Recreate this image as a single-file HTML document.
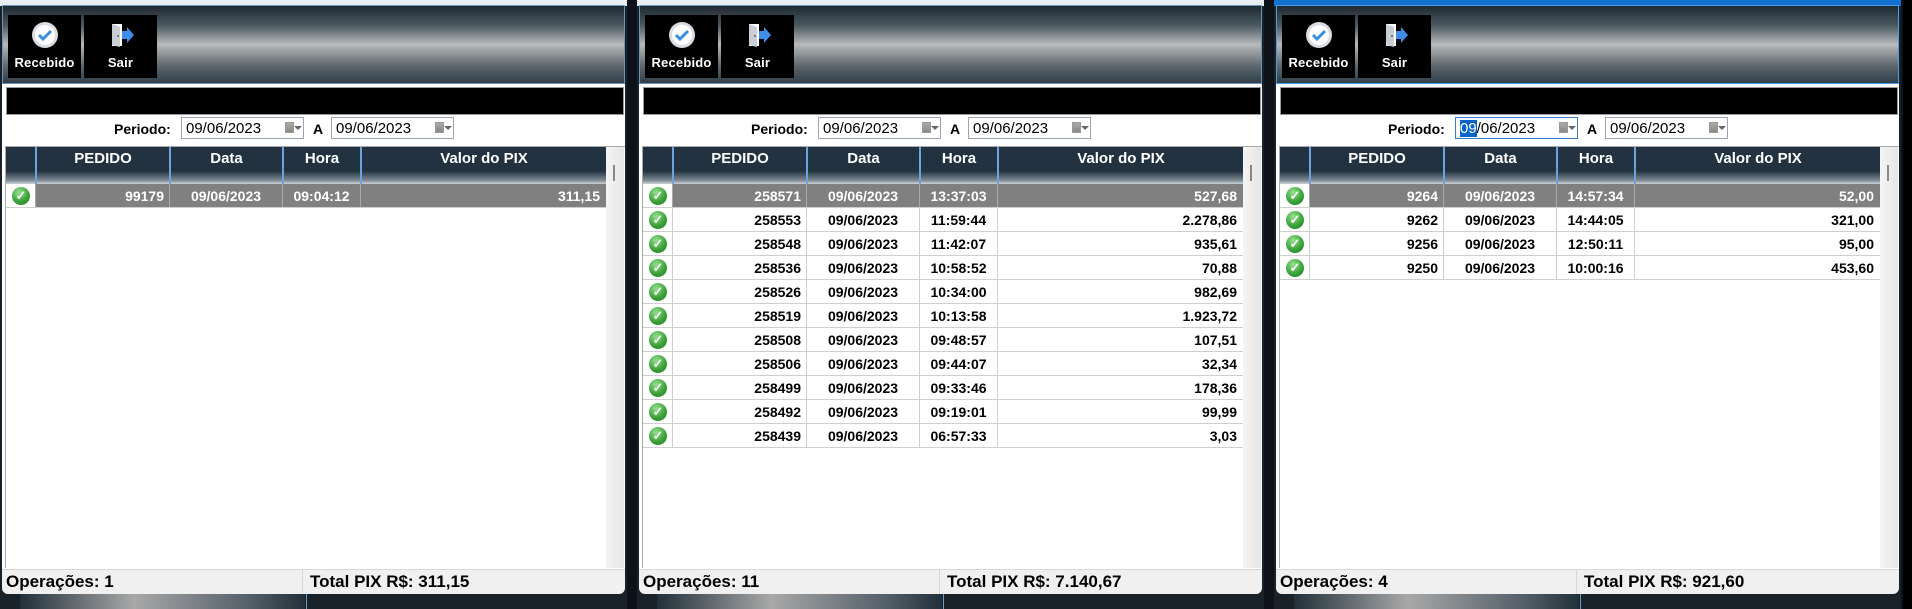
<!DOCTYPE html>
<html><head><meta charset="utf-8"><style>
*{margin:0;padding:0;box-sizing:border-box}
body{width:1912px;height:609px;background:#0c1218;position:relative;overflow:hidden;font-family:"Liberation Sans",sans-serif}
.p{position:absolute;top:0;width:627px;height:609px;background:#1a2229}
.top{position:absolute;left:0;top:0;width:627px;height:6px;background:#e9eef3}
.tb{position:absolute;left:2px;top:5px;width:623px;height:79px;border:1px solid #6d93b6;background:linear-gradient(#1f2a33 0%,#4a5860 25%,#b8babb 50%,#5c666c 78%,#2f3f4a 100%)}
.btn{position:absolute;top:9px;height:63px;background:#000;color:#fff;font-size:13px;font-weight:bold;text-align:center}
.btn span{position:absolute;left:0;right:0;top:40px;letter-spacing:.2px}
.body{position:absolute;left:2px;top:84px;width:623px;height:485px;background:#fff}
.bar{position:absolute;left:6px;top:87px;width:618px;height:28px;background:#000;border:1px solid #9a9a9a}
.lbl{position:absolute;top:121px;font-size:14px;font-weight:bold;color:#000}
.dt{position:absolute;top:117px;width:123px;height:22px;border:1px solid #9aa6b3;background:#fff;font-size:15px;padding:2px 0 0 4px;color:#000}
.dt i{position:absolute;right:9px;top:4px;width:9px;height:11px;background:linear-gradient(#aaa,#888);border:1px solid #999}
.dt b{position:absolute;right:1px;top:8px;width:0;height:0;border-left:4px solid transparent;border-right:4px solid transparent;border-top:4px solid #666}
.hd{position:absolute;left:6px;top:147px;width:600px;height:37px;background:linear-gradient(#223240 0%,#223240 65%,#7e8a93 90%,#cdd3d8 100%)}
.hc{position:absolute;top:0;height:37px;border-left:2px solid #6fa3dd;color:#fff;font-weight:bold;font-size:15px;text-align:center;padding-top:3px}
.sb{position:absolute;left:606px;top:147px;width:18px;height:421px;background:linear-gradient(90deg,#f4f4f4,#e6e6e6)}
.sb:after{content:"";position:absolute;left:7px;top:18px;width:2px;height:16px;background:#888}
.gl{position:absolute;left:5px;top:146px;width:620px;height:1px;background:#aaa}
.gb{position:absolute;left:5px;top:146px;width:1px;height:422px;background:#aaa}
.r{position:absolute;left:6px;width:600px;height:24px;border-bottom:1px solid #cfcfcf;font-size:14px;font-weight:bold;color:#000}
.r div{position:absolute;top:0;height:23px;padding-top:4px;border-left:1px solid #cfcfcf}
.r.s .c{background:#808080;color:#fff;border-left-color:#a8a8a8}
.ic{left:0;width:29px;border-left:none!important}
.ic:after{content:"✓";position:absolute;left:6px;top:3px;width:18px;height:18px;border-radius:50%;background:radial-gradient(circle at 40% 30%,#9be08f,#3aa33a 55%,#1c7a22);color:#fff;font-size:13px;line-height:18px;text-align:center;font-weight:bold}
.c1{left:29px;width:134px;text-align:right;padding-right:5px}
.c2{left:163px;width:113px;text-align:center}
.c3{left:276px;width:78px;text-align:center}
.c4{left:354px;width:246px;text-align:right;padding-right:6px}
.st{position:absolute;left:2px;top:569px;width:623px;height:25px;background:#f0f0f0;border-top:1px solid #d8d8d8;border-radius:0 0 6px 6px;font-size:17px;font-weight:bold;color:#000}
.st span{position:absolute;top:2px}
.st em{position:absolute;left:300px;top:0;width:1px;height:24px;background:#d8d8d8}
.bt{position:absolute;left:20px;top:594px;width:285px;height:15px;background:linear-gradient(90deg,#22303a,#a8a8a8 40%,#55606a 80%,#22303a)}
.bt:after{content:"";position:absolute;right:-2px;top:0;width:1px;height:15px;background:#6a9ccc}
</style></head><body>

<div class="p" style="left:0">
 <div class="top"></div>
 <div class="tb">
  <div class="btn" style="left:5px;width:73px">
   <svg style="position:absolute;left:23px;top:6px" width="28" height="28"><circle cx="14" cy="14" r="13" fill="#d9dde2"/><circle cx="14" cy="14" r="10" fill="#fff"/><path d="M8 14l4 4 8-8" stroke="#3a8de0" stroke-width="3" fill="none"/></svg>
   <span>Recebido</span></div>
  <div class="btn" style="left:81px;width:73px">
   <svg style="position:absolute;left:24px;top:6px" width="28" height="28"><path d="M4 3h10v22H4z" fill="#fff"/><path d="M4 3l8 3v20l-8-2z" fill="#c9ced4"/><path d="M14 10h5v-4l7 8-7 8v-4h-5z" fill="#3f8de8"/><circle cx="10" cy="15" r="1" fill="#666"/></svg>
   <span>Sair</span></div>
 </div>
 <div class="body"></div>
 <div class="bar"></div>
 <div class="lbl" style="left:114px">Periodo:</div>
 <div class="dt" style="left:181px">09/06/2023<i></i><b></b></div>
 <div class="lbl" style="left:313px">A</div>
 <div class="dt" style="left:331px">09/06/2023<i></i><b></b></div>
 <div class="gl"></div><div class="gb"></div>
 <div class="hd">
  <div class="hc" style="left:29px;width:134px">PEDIDO</div>
  <div class="hc" style="left:163px;width:113px">Data</div>
  <div class="hc" style="left:276px;width:78px">Hora</div>
  <div class="hc" style="left:354px;width:246px">Valor do PIX</div>
 </div>
 <div class="sb"></div>
 <div class="r s" style="top:184px"><div class="ic"></div><div class="c c1">99179</div><div class="c c2">09/06/2023</div><div class="c c3">09:04:12</div><div class="c c4">311,15</div></div>
 <div class="st"><span style="left:4px">Operações: 1</span><em></em><span style="left:308px">Total PIX R$: 311,15</span></div>
 <div class="bt"></div>
</div>

<div class="p" style="left:637px">
 <div class="top"></div>
 <div class="tb">
  <div class="btn" style="left:5px;width:73px">
   <svg style="position:absolute;left:23px;top:6px" width="28" height="28"><circle cx="14" cy="14" r="13" fill="#d9dde2"/><circle cx="14" cy="14" r="10" fill="#fff"/><path d="M8 14l4 4 8-8" stroke="#3a8de0" stroke-width="3" fill="none"/></svg>
   <span>Recebido</span></div>
  <div class="btn" style="left:81px;width:73px">
   <svg style="position:absolute;left:24px;top:6px" width="28" height="28"><path d="M4 3h10v22H4z" fill="#fff"/><path d="M4 3l8 3v20l-8-2z" fill="#c9ced4"/><path d="M14 10h5v-4l7 8-7 8v-4h-5z" fill="#3f8de8"/><circle cx="10" cy="15" r="1" fill="#666"/></svg>
   <span>Sair</span></div>
 </div>
 <div class="body"></div>
 <div class="bar"></div>
 <div class="lbl" style="left:114px">Periodo:</div>
 <div class="dt" style="left:181px">09/06/2023<i></i><b></b></div>
 <div class="lbl" style="left:313px">A</div>
 <div class="dt" style="left:331px">09/06/2023<i></i><b></b></div>
 <div class="gl"></div><div class="gb"></div>
 <div class="hd">
  <div class="hc" style="left:29px;width:134px">PEDIDO</div>
  <div class="hc" style="left:163px;width:113px">Data</div>
  <div class="hc" style="left:276px;width:78px">Hora</div>
  <div class="hc" style="left:354px;width:246px">Valor do PIX</div>
 </div>
 <div class="sb"></div>
 <div class="r s" style="top:184px"><div class="ic"></div><div class="c c1">258571</div><div class="c c2">09/06/2023</div><div class="c c3">13:37:03</div><div class="c c4">527,68</div></div>
 <div class="r" style="top:208px"><div class="ic"></div><div class="c c1">258553</div><div class="c c2">09/06/2023</div><div class="c c3">11:59:44</div><div class="c c4">2.278,86</div></div>
 <div class="r" style="top:232px"><div class="ic"></div><div class="c c1">258548</div><div class="c c2">09/06/2023</div><div class="c c3">11:42:07</div><div class="c c4">935,61</div></div>
 <div class="r" style="top:256px"><div class="ic"></div><div class="c c1">258536</div><div class="c c2">09/06/2023</div><div class="c c3">10:58:52</div><div class="c c4">70,88</div></div>
 <div class="r" style="top:280px"><div class="ic"></div><div class="c c1">258526</div><div class="c c2">09/06/2023</div><div class="c c3">10:34:00</div><div class="c c4">982,69</div></div>
 <div class="r" style="top:304px"><div class="ic"></div><div class="c c1">258519</div><div class="c c2">09/06/2023</div><div class="c c3">10:13:58</div><div class="c c4">1.923,72</div></div>
 <div class="r" style="top:328px"><div class="ic"></div><div class="c c1">258508</div><div class="c c2">09/06/2023</div><div class="c c3">09:48:57</div><div class="c c4">107,51</div></div>
 <div class="r" style="top:352px"><div class="ic"></div><div class="c c1">258506</div><div class="c c2">09/06/2023</div><div class="c c3">09:44:07</div><div class="c c4">32,34</div></div>
 <div class="r" style="top:376px"><div class="ic"></div><div class="c c1">258499</div><div class="c c2">09/06/2023</div><div class="c c3">09:33:46</div><div class="c c4">178,36</div></div>
 <div class="r" style="top:400px"><div class="ic"></div><div class="c c1">258492</div><div class="c c2">09/06/2023</div><div class="c c3">09:19:01</div><div class="c c4">99,99</div></div>
 <div class="r" style="top:424px"><div class="ic"></div><div class="c c1">258439</div><div class="c c2">09/06/2023</div><div class="c c3">06:57:33</div><div class="c c4">3,03</div></div>
 <div class="st"><span style="left:4px">Operações: 11</span><em></em><span style="left:308px">Total PIX R$: 7.140,67</span></div>
 <div class="bt"></div>
</div>

<div class="p" style="left:1274px">
 <div class="top" style="background:#1272d2"></div>
 <div class="tb" style="border-color:#4d9be6">
  <div class="btn" style="left:5px;width:73px">
   <svg style="position:absolute;left:23px;top:6px" width="28" height="28"><circle cx="14" cy="14" r="13" fill="#d9dde2"/><circle cx="14" cy="14" r="10" fill="#fff"/><path d="M8 14l4 4 8-8" stroke="#3a8de0" stroke-width="3" fill="none"/></svg>
   <span>Recebido</span></div>
  <div class="btn" style="left:81px;width:73px">
   <svg style="position:absolute;left:24px;top:6px" width="28" height="28"><path d="M4 3h10v22H4z" fill="#fff"/><path d="M4 3l8 3v20l-8-2z" fill="#c9ced4"/><path d="M14 10h5v-4l7 8-7 8v-4h-5z" fill="#3f8de8"/><circle cx="10" cy="15" r="1" fill="#666"/></svg>
   <span>Sair</span></div>
 </div>
 <div class="body"></div>
 <div class="bar"></div>
 <div class="lbl" style="left:114px">Periodo:</div>
 <div class="dt" style="left:181px;border-color:#3a7cc8"><span style="background:#0a64c8;color:#fff">09</span>/06/2023<i></i><b></b></div>
 <div class="lbl" style="left:313px">A</div>
 <div class="dt" style="left:331px">09/06/2023<i></i><b></b></div>
 <div class="gl"></div><div class="gb"></div>
 <div class="hd">
  <div class="hc" style="left:29px;width:134px">PEDIDO</div>
  <div class="hc" style="left:163px;width:113px">Data</div>
  <div class="hc" style="left:276px;width:78px">Hora</div>
  <div class="hc" style="left:354px;width:246px">Valor do PIX</div>
 </div>
 <div class="sb"></div>
 <div class="r s" style="top:184px"><div class="ic"></div><div class="c c1">9264</div><div class="c c2">09/06/2023</div><div class="c c3">14:57:34</div><div class="c c4">52,00</div></div>
 <div class="r" style="top:208px"><div class="ic"></div><div class="c c1">9262</div><div class="c c2">09/06/2023</div><div class="c c3">14:44:05</div><div class="c c4">321,00</div></div>
 <div class="r" style="top:232px"><div class="ic"></div><div class="c c1">9256</div><div class="c c2">09/06/2023</div><div class="c c3">12:50:11</div><div class="c c4">95,00</div></div>
 <div class="r" style="top:256px"><div class="ic"></div><div class="c c1">9250</div><div class="c c2">09/06/2023</div><div class="c c3">10:00:16</div><div class="c c4">453,60</div></div>
 <div class="st"><span style="left:4px">Operações: 4</span><em></em><span style="left:308px">Total PIX R$: 921,60</span></div>
 <div class="bt"></div>
</div>
<div style="position:absolute;left:1903px;top:0;width:9px;height:609px;background:#000"></div>
</body></html>
